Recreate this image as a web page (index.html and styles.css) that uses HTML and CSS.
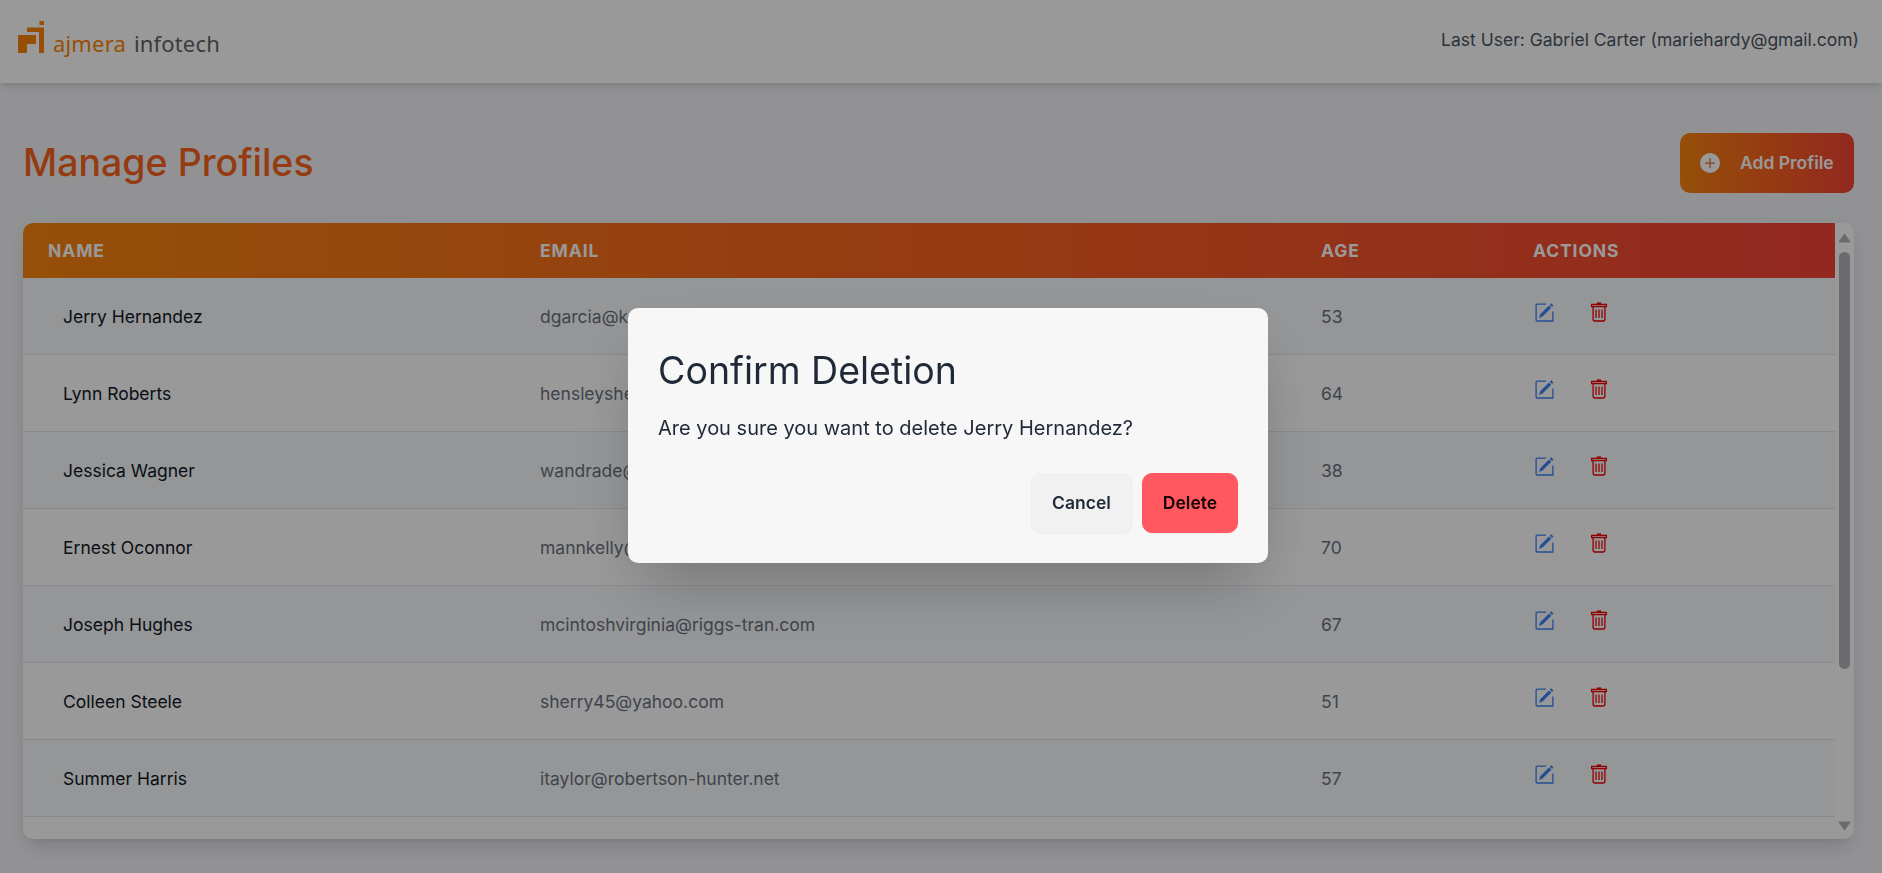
FILE: index.html
```
<!DOCTYPE html>
<html lang="en">
<head>
<meta charset="utf-8">
<title>Manage Profiles</title>
<link rel="stylesheet" href="styles.css">
</head>
<body>
<svg class="sprite" aria-hidden="true">
  <symbol id="edit" viewBox="0 0 20 20">
    <path d="M12 2.1H3.3Q2.1 2.1 2.1 3.3V17.9Q2.1 19 3.3 19H18.9V9.4" fill="none" stroke="currentColor" stroke-width="1.3"/>
    <path d="M5 16L6.2 12.3L15 3.5L17.3 5.8L8.5 14.6ZM15.8 2.7L17.2 1.3L19.4 3.5L18 4.9Z" fill="currentColor"/>
  </symbol>
  <symbol id="trash" viewBox="0 0 20 20">
    <path d="M7.8 1.2H12.2" fill="none" stroke="currentColor" stroke-width="1.5"/>
    <path d="M2.6 2.5H17.4V4.7H2.6ZM4.1 4.7V17Q4.1 19 5.9 19H14.1Q15.9 19 15.9 17V4.7" fill="none" stroke="currentColor" stroke-width="1.3"/>
    <path d="M7 7.500V16M10 7.500V16M13 7.500V16" fill="none" stroke="currentColor" stroke-width="1.25"/>
  </symbol>
</svg>
<header class="topbar">
  <div class="logo">
    <svg class="logo-mark" width="26" height="32" viewBox="0 0 26 32" fill="#fb8409"><path d="M0 14H18V23H9V32H0ZM9 6.5H26V32H21V11H9ZM21.500 0H26V4H21.500Z"/></svg>
    <span class="logo-text"><span class="logo-first">ajmera</span> infotech</span>
  </div>
  <div class="user">Last User: Gabriel Carter (mariehardy@gmail.com)</div>
</header>
<main class="content">
  <div class="heading">
    <h1 class="title">Manage Profiles</h1>
    <button class="add"><svg width="20" height="20" viewBox="0 0 20 20"><circle cx="10" cy="10" r="10" fill="#fff"/><path d="M10 5V15M5 10H15" stroke="#e5702a" stroke-width="1.25"/></svg><span class="add-label">Add Profile</span></button>
  </div>
  <section class="card">
    <div class="table">
      <div class="row head"><span>NAME</span><span>EMAIL</span><span>AGE</span><span>ACTIONS</span></div>
      <div class="row"><span class="name">Jerry Hernandez</span><span>dgarcia@kelly.com</span><span>53</span><span class="actions"><svg class="edit"><use href="#edit"/></svg><svg class="trash"><use href="#trash"/></svg></span></div>
      <div class="row"><span class="name">Lynn Roberts</span><span>hensleyshelly@yahoo.com</span><span>64</span><span class="actions"><svg class="edit"><use href="#edit"/></svg><svg class="trash"><use href="#trash"/></svg></span></div>
      <div class="row"><span class="name">Jessica Wagner</span><span>wandrade@gmail.com</span><span>38</span><span class="actions"><svg class="edit"><use href="#edit"/></svg><svg class="trash"><use href="#trash"/></svg></span></div>
      <div class="row"><span class="name">Ernest Oconnor</span><span>mannkelly@gmail.com</span><span>70</span><span class="actions"><svg class="edit"><use href="#edit"/></svg><svg class="trash"><use href="#trash"/></svg></span></div>
      <div class="row"><span class="name">Joseph Hughes</span><span>mcintoshvirginia@riggs-tran.com</span><span>67</span><span class="actions"><svg class="edit"><use href="#edit"/></svg><svg class="trash"><use href="#trash"/></svg></span></div>
      <div class="row"><span class="name">Colleen Steele</span><span>sherry45@yahoo.com</span><span>51</span><span class="actions"><svg class="edit"><use href="#edit"/></svg><svg class="trash"><use href="#trash"/></svg></span></div>
      <div class="row"><span class="name">Summer Harris</span><span>itaylor@robertson-hunter.net</span><span>57</span><span class="actions"><svg class="edit"><use href="#edit"/></svg><svg class="trash"><use href="#trash"/></svg></span></div>
    </div>
    <div class="scrollbar">
      <svg width="13" height="10" viewBox="0 0 13 10"><path d="M6.500 1L12 9H1Z"/></svg>
      <div class="track"><div class="thumb"></div></div>
      <svg width="13" height="10" viewBox="0 0 13 10"><path d="M6.500 9L12 1H1Z"/></svg>
    </div>
  </section>
</main>
<div class="backdrop">
  <div class="modal" role="dialog">
    <h2 class="modal-title">Confirm Deletion</h2>
    <p class="modal-text">Are you sure you want to delete Jerry Hernandez?</p>
    <div class="modal-actions"><button class="btn cancel">Cancel</button><button class="btn delete">Delete</button></div>
  </div>
</div>
</body>
</html>
```
FILE: styles.css
```
* { box-sizing: border-box; }
body { margin: 0; height: 873px; overflow: hidden; background: #f3f4f7; font-family: Inter, sans-serif; font-size: 17.5px; color: #1f2937; }
button { font: inherit; border: 0; }
.sprite { display: none; }
.topbar { height: 83px; padding: 0 23px 0 18px; display: flex; justify-content: space-between; background: #fff; box-shadow: 0 5px 7.500px -1px rgba(0,0,0,.1), 0 2.500px 5px -2.500px rgba(0,0,0,.1); }
.logo { display: flex; align-items: flex-start; padding-top: 21px; gap: 9px; }
.logo-text { font-family: "Noto Sans", sans-serif; font-size: 22px; line-height: 30px; padding-top: 7px; letter-spacing: .17px; word-spacing: 2px; color: #636466; white-space: nowrap; }
.logo-first { color: #fb8409; }
.user { padding-top: 27px; line-height: 25px; color: #4b5563; }
.content { padding: 50px 28px 34px 23px; }
.heading { display: flex; justify-content: space-between; align-items: center; height: 60px; margin-bottom: 30px; }
.title { margin: 0; padding-bottom: 2px; font-size: 37.5px; font-weight: 500; line-height: 45px; color: #f9631f; }
.add { width: 174px; height: 60px; padding: 0 20px; display: flex; align-items: center; gap: 20px; border-radius: 10px; color: #fff; font-weight: 600; white-space: nowrap; background: linear-gradient(90deg, #f9850f, #f9631f 50%, #f44336); }
.add-label { padding-bottom: 2px; }
.card { display: flex; height: 616px; border-radius: 10px; overflow: hidden; background: #fff; box-shadow: 0 12.500px 19px -4px rgba(0,0,0,.1), 0 5px 7.500px -5px rgba(0,0,0,.1), 0 0 25px rgba(100,116,139,.06); }
.table { flex: 1; }
.row { display: grid; grid-template-columns: 492px 781px 212px 1fr; height: 77px; padding-left: 25px; align-items: center; border-bottom: 1px solid #e5e7eb; color: #6b7280; }
.row:nth-child(even) { background: #f8fafc; }
.row.head { height: 55px; border: 0; color: #fff; font-weight: 700; letter-spacing: .88px; background: linear-gradient(90deg, #f8850f, #f9631f 50%, #f44336); }
.row .name { color: #111827; padding-left: 15px; }
.actions { display: flex; gap: 35px; padding: 0 0 8px 1px; }
.actions svg { width: 20px; height: 20px; }
.edit { color: #3b82f6; }
.trash { color: #f00000; }
.scrollbar { width: 19px; display: flex; flex-direction: column; align-items: center; padding: 10px 0 8px; }
.scrollbar svg { fill: #b1b2b8; stroke: #b1b2b8; stroke-linejoin: round; }
.track { flex: 1; padding-top: 9px; }
.thumb { width: 11px; height: 417px; border-radius: 6px; background: #b1b2b8; }
.backdrop { position: fixed; inset: 0; background: rgba(0,0,0,.4); display: flex; align-items: center; justify-content: center; padding: 0 0 2px 14px; }
.modal { width: 640px; height: 255px; padding: 40px 30px 30px; border-radius: 10px; background: #f7f7f7; box-shadow: 0 31px 62px -15px rgba(0,0,0,.25); }
.modal-title { margin: 0 0 15px; font-size: 37.5px; font-weight: 400; line-height: 45px; }
.modal-text { margin: 0 0 25px; font-size: 20px; line-height: 40px; }
.modal-actions { display: flex; justify-content: flex-end; gap: 10px; }
.btn { height: 60px; padding: 0 0 2px; border-radius: 10px; font-weight: 600; color: #1f2937; background: #f1f1f1; border: 1px solid #f0f0f0; box-shadow: 0 1px 2px rgba(0,0,0,.05); }
.cancel { width: 101px; }
.delete { width: 96px; color: #130202; background: #ff5860; border-color: #ff5860; }
```
